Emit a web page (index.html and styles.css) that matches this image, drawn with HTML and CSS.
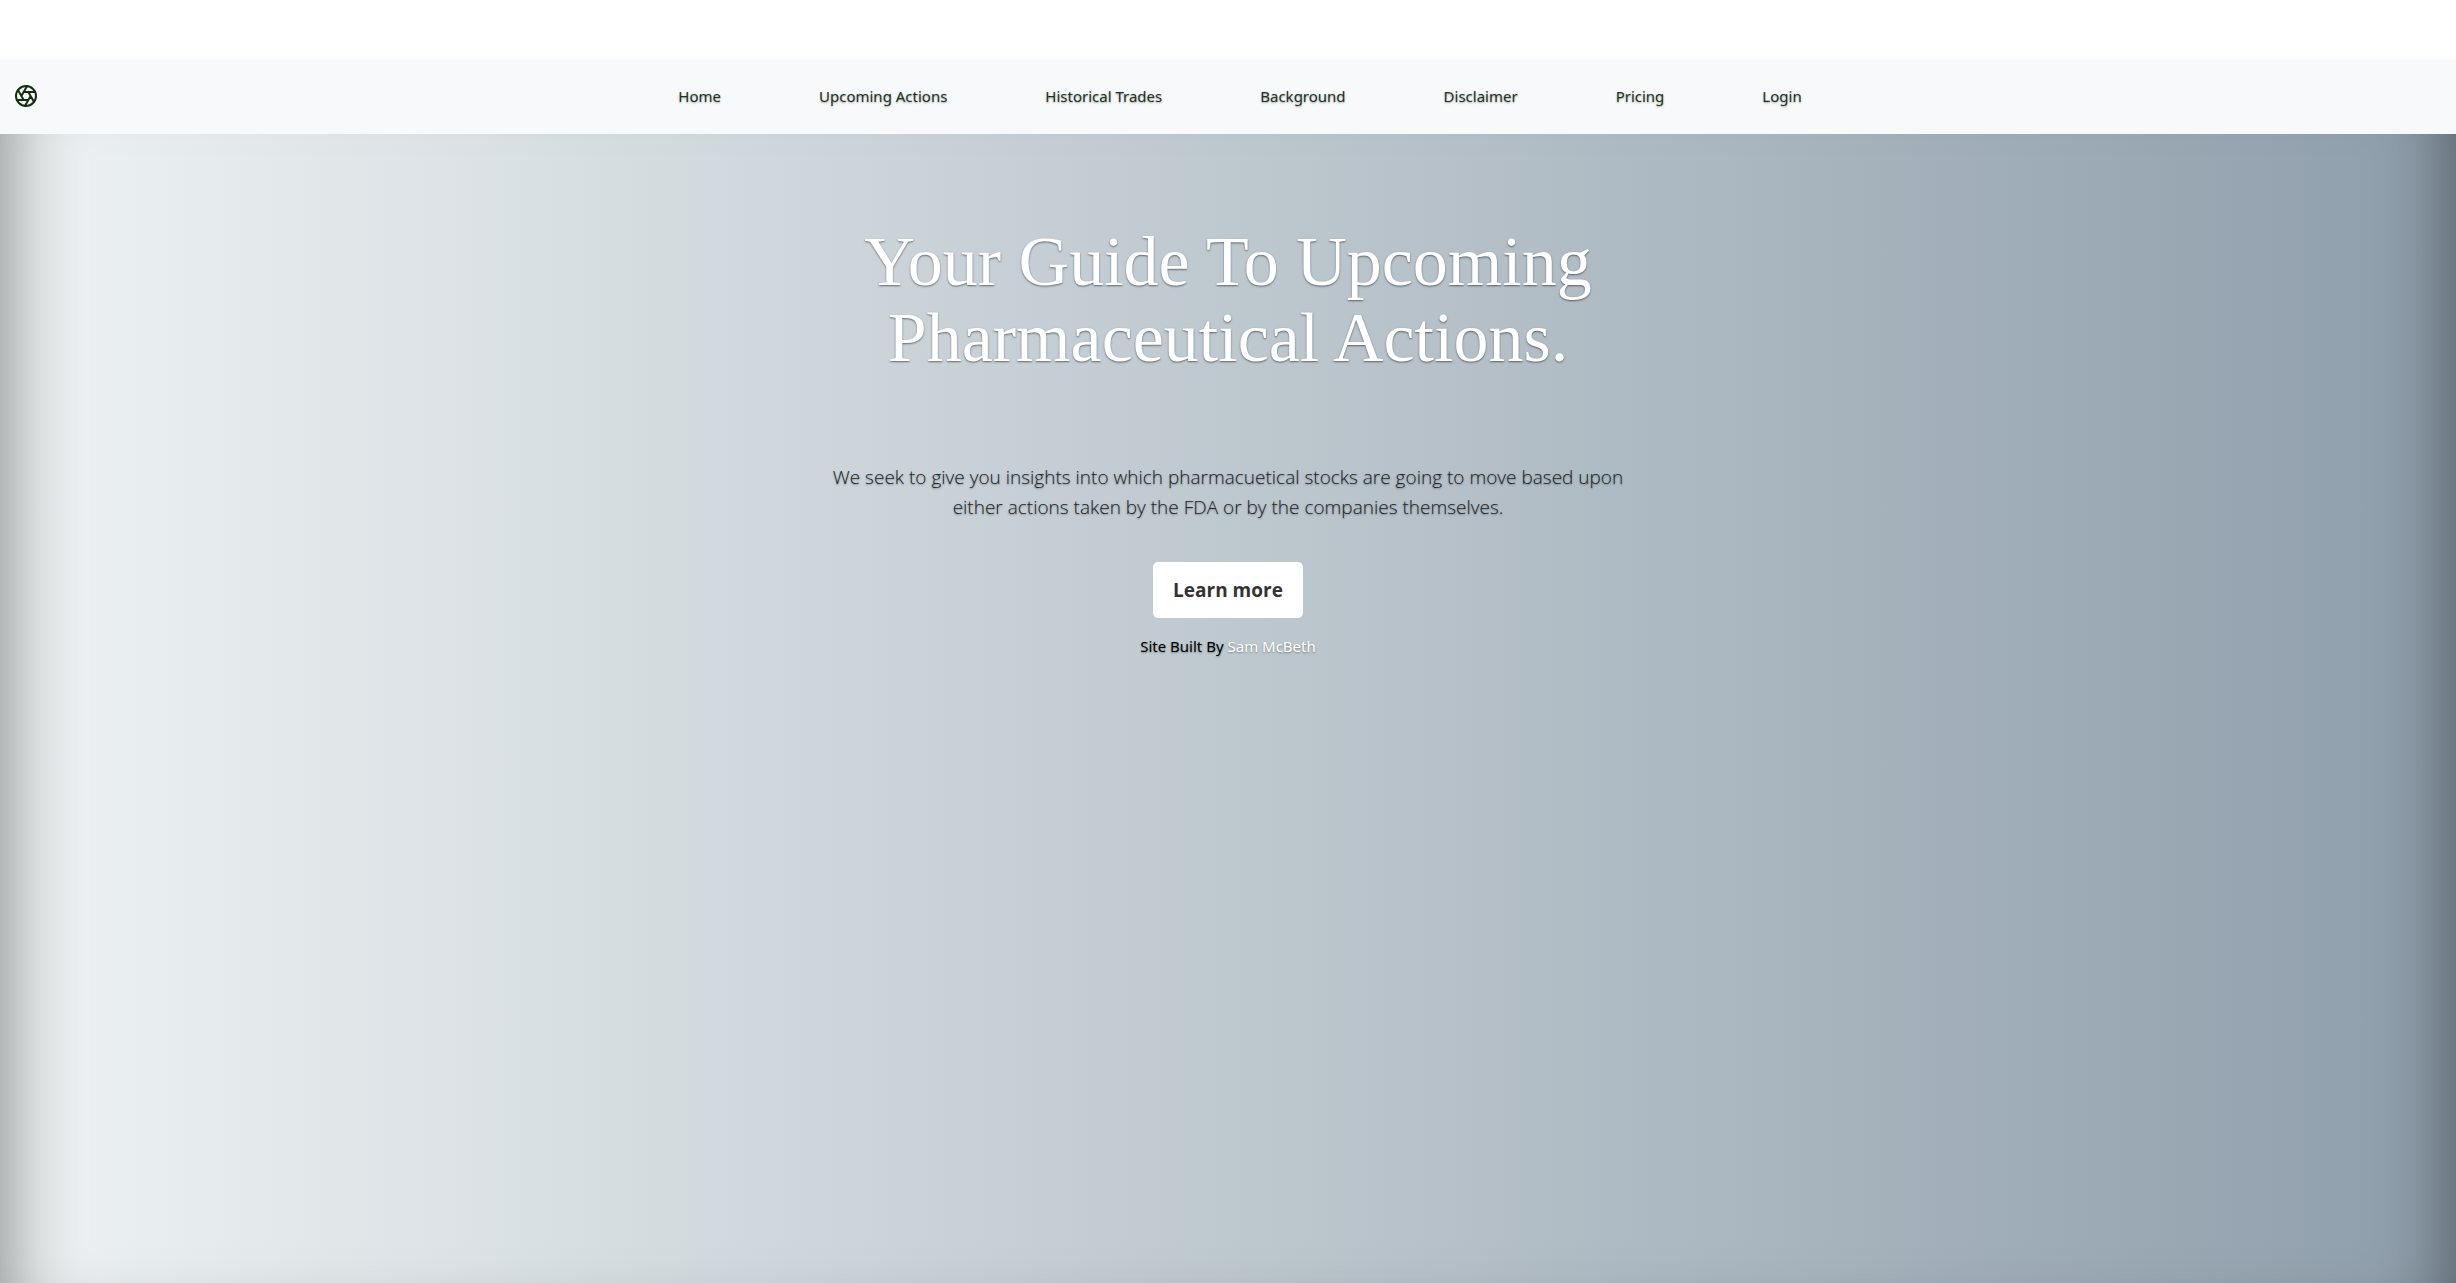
FILE: index.html
```
<!DOCTYPE html>
<html lang="en">
<head>
<meta charset="utf-8">
<meta name="viewport" content="width=device-width, initial-scale=1">
<title>Upcoming Pharmaceutical Actions</title>
<link rel="stylesheet" href="styles.css">
</head>
<body>
<div class="page">
  <header class="site-header">
    <a class="brand" href="#" aria-label="Start page">
      <svg width="24" height="24" viewBox="0 0 24 24" fill="none" stroke="currentColor" stroke-width="2" stroke-linecap="round" stroke-linejoin="round" aria-hidden="true"><circle cx="12" cy="12" r="10"/><path d="M14.31 8l5.74 9.94M9.69 8h11.48M7.38 12l5.74-9.94M9.69 16L3.95 6.06M14.31 16H2.83m13.79-4l-5.74 9.94"/></svg>
    </a>
    <nav class="site-nav">
      <a href="#">Home</a>
      <a href="#">Upcoming Actions</a>
      <a href="#">Historical Trades</a>
      <a href="#">Background</a>
      <a href="#">Disclaimer</a>
      <a href="#">Pricing</a>
      <a href="#">Login</a>
    </nav>
  </header>
  <main class="cover">
    <h1>Your Guide To Upcoming Pharmaceutical Actions.</h1>
    <p class="lead">We seek to give you insights into which pharmacuetical stocks are going to move based upon either actions taken by the FDA or by the companies themselves.</p>
    <button class="more" type="button">Learn more</button>
    <p class="credit">Site Built By <a href="#">Sam McBeth</a></p>
  </main>
</div>
</body>
</html>
```
FILE: styles.css
```
* {
  box-sizing: border-box;
}

body {
  height: 100vh;
  margin: 0;
  padding-top: 59px;
  overflow: hidden;
  background: #fff;
  color: #000;
  font: 15px/24px "Noto Sans", "Open Sans", sans-serif;
  text-shadow: 0 1px 2px rgba(0, 0, 0, 0.35);
}

.page {
  min-height: 100vh;
  background: linear-gradient(to right, #eef2f3, #8e9eab);
  box-shadow: inset 0 0 80px rgba(0, 0, 0, 0.5);
}

.site-header {
  display: grid;
  grid-template-columns: 1fr auto 1fr;
  align-items: center;
  height: 75px;
  padding: 0 14px 2px;
  background: #f8f9fb;
  color: #12300f;
}

.brand {
  display: flex;
  color: inherit;
}

.site-nav {
  display: flex;
  gap: 98px;
  padding-left: 24px;
}

.site-nav a {
  color: #1c331c;
  text-decoration: none;
}

.cover {
  display: flex;
  flex-direction: column;
  align-items: center;
  max-width: 800px;
  margin: 0 auto;
  padding-top: 90px;
  text-align: center;
}

h1 {
  margin: 0;
  color: #fff;
  font: 400 70px/76px Georgia, "Liberation Serif", serif;
  text-shadow: 0 1px 2px rgba(0, 0, 0, 0.5);
}

.lead {
  margin: 86px 0 0;
  color: #212529;
  font: 300 19px/30px "Open Sans", "Noto Sans", sans-serif;
}

.more {
  height: 56px;
  margin-top: 40px;
  padding: 0 20px;
  border: 0;
  border-radius: 5px;
  background: #fff;
  color: #333;
  font: 700 19px/30px "Open Sans", "Noto Sans", sans-serif;
  text-shadow: none;
}

.credit {
  margin: 16px 0 0;
}

.credit a {
  color: #fff;
  text-decoration: none;
}
```
